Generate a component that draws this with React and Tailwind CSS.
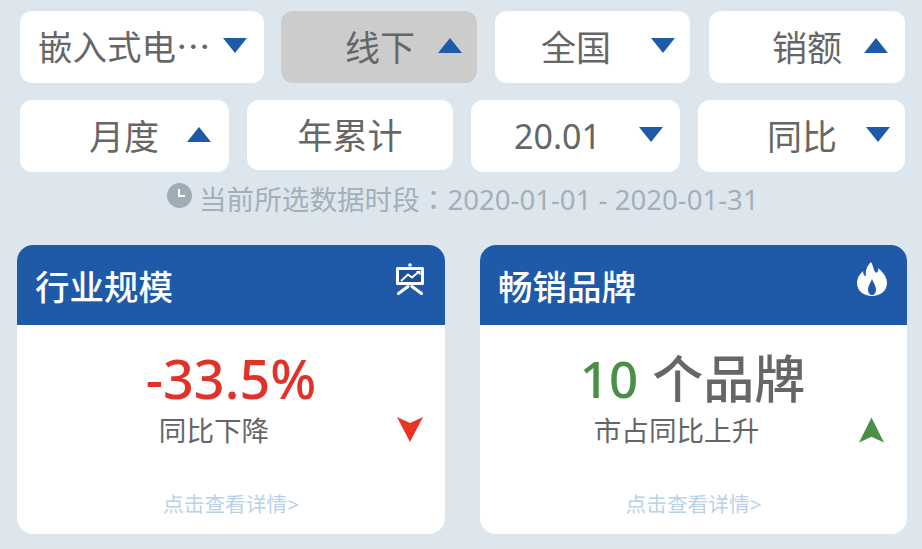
const FONT = "font-['Noto_Sans','Noto_Sans_CJK_SC',sans-serif]";
const TC = "font-['Noto_Sans_CJK_TC',sans-serif]";

function Tri({ up }) {
  return (
    <svg width="24" height="15" viewBox="0 0 24 15" className="shrink-0 -mt-[3px]">
      <path d={up ? "M12 0L24 15H0Z" : "M0 0H24L12 15Z"} fill="#1f5aa8" />
    </svg>
  );
}

function Sel({ w, label, up, none, grey, pr, gap, ml = "", h = "h-[72px]", size = "text-[35px]" }) {
  return (
    <div
      className={`${w} ${h} ${ml} ${size} shrink-0 rounded-[12px] flex items-center ${none ? "justify-center" : "justify-end"} ${pr || ""} ${gap || ""} ${grey ? "bg-[#cccccc]" : "bg-white"} leading-none text-[#666666]`}
    >
      <span>{label}</span>
      {!none && <Tri up={up} />}
    </div>
  );
}

function Card({ w, title, icon, arrow, arrowRight, value, sub }) {
  return (
    <div className={`${w} h-[289px] rounded-[16px] overflow-hidden bg-white flex flex-col`}>
      <div className="h-[80px] shrink-0 bg-[#1f5aa8] flex justify-between pl-[18px] pr-[19px]">
        <span className="text-white text-[34.5px] leading-none font-medium pt-[25px]">{title}</span>
        <div className="pt-[17px]">{icon}</div>
      </div>
      <div className="relative flex-1 flex flex-col items-center">
        <div className="h-[54px] mt-[26px] flex items-center">{value}</div>
        <div className="text-[27.6px] leading-none text-[#666666] mt-[12px] -ml-[34px]">{sub}</div>
        <div className={`absolute top-[92px] ${arrowRight}`}>{arrow}</div>
        <div className="absolute top-[169px] text-[20.7px] leading-none text-[#b9d2e8]">点击查看详情&gt;</div>
      </div>
    </div>
  );
}

export default function App() {
  return (
    <div className={`${FONT} w-[922px] h-[549px] bg-[#dde6ed] overflow-hidden pt-[11px]`}>
      <div className="flex pl-[20px]">
        <div className="w-[244px] h-[72px] shrink-0 rounded-[12px] bg-white flex items-center pl-[18px] pr-[17px] justify-between text-[34.5px] leading-none text-[#666666]">
          <span className="-mt-[2px]">嵌入式电<span className={TC}>…</span></span>
          <Tri />
        </div>
        <Sel w="w-[196px]" ml="ml-[17px]" label="线下" up grey pr="pr-[15px]" gap="gap-[23px]" />
        <Sel w="w-[195px]" ml="ml-[18px]" label="全国" pr="pr-[15px]" gap="gap-[40px]" />
        <Sel w="w-[196px]" ml="ml-[19px]" label="销额" up pr="pr-[17px]" gap="gap-[22px]" />
      </div>
      <div className="flex pl-[20px] gap-[18px] mt-[17px]">
        <Sel w="w-[209px]" label="月度" up pr="pr-[18px]" gap="gap-[28px]" />
        <Sel w="w-[206px]" label="年累计" none h="h-[70px]" />
        <Sel w="w-[209px]" label="20.01" size="text-[34px]" pr="pr-[17px]" gap="gap-[38px]" />
        <Sel w="w-[207px]" label="同比" pr="pr-[15px]" gap="gap-[29px]" />
      </div>
      <div className="flex items-center pl-[167px] h-[34px] mt-[10px] text-[27.6px] leading-none text-[#a3b0b9] whitespace-nowrap">
        <svg width="25" height="25" viewBox="0 0 25 25" className="mr-[7px] -mt-[8px] shrink-0">
          <circle cx="12.5" cy="12.5" r="12.5" fill="#a0adb6" />
          <path d="M12 6V13H18" fill="none" stroke="#fff" strokeWidth="2" />
        </svg>
        <span>当前所选数据时段<span className={TC}>：</span>2020-01-01 - 2020-01-31</span>
      </div>
      <div className="flex pl-[17px] gap-[35px] mt-[29px]">
        <Card
          w="w-[428px]"
          title="行业规模"
          arrowRight="right-[22px]"
          icon={
            <svg width="30" height="32" viewBox="0 0 30 32" fill="none" stroke="#fff" className="mt-[1px] mr-[1px]">
              <rect x="2.5" y="5.5" width="25" height="15" strokeWidth="3" strokeLinejoin="round" fill="#1c4f94" />
              <path d="M6 18L13 11.5L17 14.5L24 8.5" strokeWidth="2" />
              <path d="M21 8H25.5V12.5Z" fill="#fff" stroke="none" />
              <path d="M3.5 30.5L13 23.5M26.5 30.5L17 23.5" strokeWidth="3" strokeLinecap="round" />
              <circle cx="15" cy="2" r="1.8" fill="#fff" stroke="none" />
            </svg>
          }
          value={<div className="text-[54px] leading-none font-medium text-[#e1322a]">-33.5%</div>}
          sub="同比下降"
          arrow={
            <svg width="26" height="25" viewBox="0 0 26 25">
              <path d="M0 0L13 6L26 0L13 25Z" fill="#e93323" />
            </svg>
          }
        />
        <Card
          w="w-[427px]"
          title="畅销品牌"
          arrowRight="right-[23px]"
          icon={
            <svg width="30" height="34" viewBox="0 0 30 34" className="mr-[1px]">
              <path
                fillRule="evenodd"
                fill="#fff"
                d="M14 0C17 5 16 8 19 11C21 10 22 8 21 6C26 10 30 15 30 21C30 29 23 34 15 34C7 34 0 29 0 21C0 16 3 12 6 9C6 12 7 14 9 14C8 9 10 4 14 0ZM15 17C13 22 11 24 11 28C11 31 13 33 15 33C17 33 19 31 19 28C19 24 17 22 15 17Z"
              />
            </svg>
          }
          value={
            <div className="flex items-baseline text-[51px] leading-none font-medium text-[#666666] -ml-[2px]">
              <span className="text-[#4a8f45] mr-[14px]">10</span>
              <span>个品牌</span>
            </div>
          }
          sub="市占同比上升"
          arrow={
            <svg width="25" height="26" viewBox="0 0 26 26">
              <path d="M13 0L26 26L13 20L0 26Z" fill="#4a8f45" />
            </svg>
          }
        />
      </div>
    </div>
  );
}
